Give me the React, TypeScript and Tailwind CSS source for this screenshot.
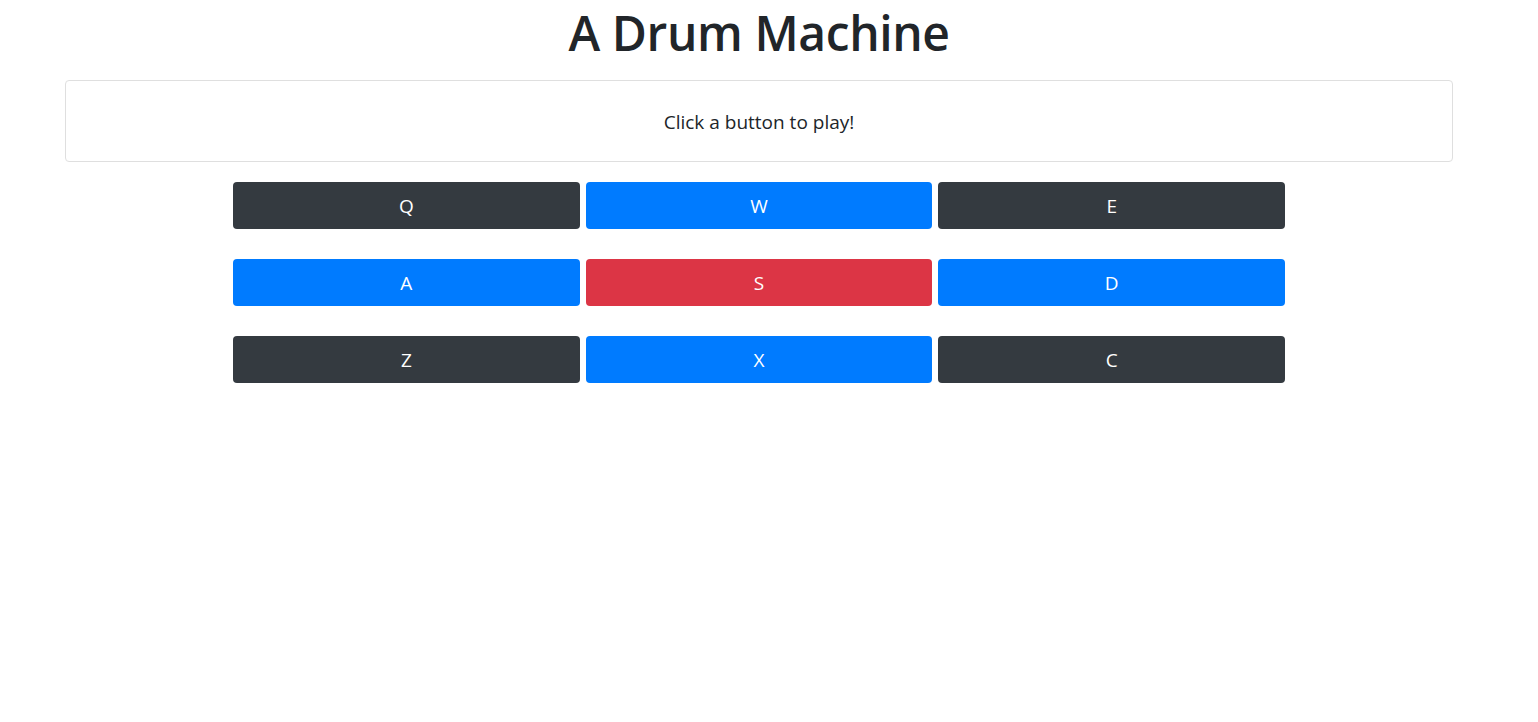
const pads = [
  { key: "Q", color: "bg-[#343a40]" },
  { key: "W", color: "bg-[#007bff]" },
  { key: "E", color: "bg-[#343a40]" },
  { key: "A", color: "bg-[#007bff]" },
  { key: "S", color: "bg-[#dc3545]" },
  { key: "D", color: "bg-[#007bff]" },
  { key: "Z", color: "bg-[#343a40]" },
  { key: "X", color: "bg-[#007bff]" },
  { key: "C", color: "bg-[#343a40]" },
];

export default function App() {
  return (
    <div className="w-[1518px] min-h-[722px] bg-white font-['Open_Sans',sans-serif] text-[#212529]">
      <h1 className="text-center text-[48px] font-semibold leading-[66px] tracking-[-0.4px]">
        A Drum Machine
      </h1>
      <div className="mx-[65px] mt-[14px] h-[82px] flex items-center justify-center rounded border border-[#dfdfdf]">
        <p className="text-[19px] pt-[3px]">Click a button to play!</p>
      </div>
      <div className="mx-auto mt-[20px] w-[1052px] grid grid-cols-3 gap-x-[6px] gap-y-[30px]">
        {pads.map((p) => (
          <button
            key={p.key}
            className={`${p.color} h-[47px] rounded text-white text-[19px] pt-[2px] flex items-center justify-center`}
          >
            {p.key}
          </button>
        ))}
      </div>
    </div>
  );
}
